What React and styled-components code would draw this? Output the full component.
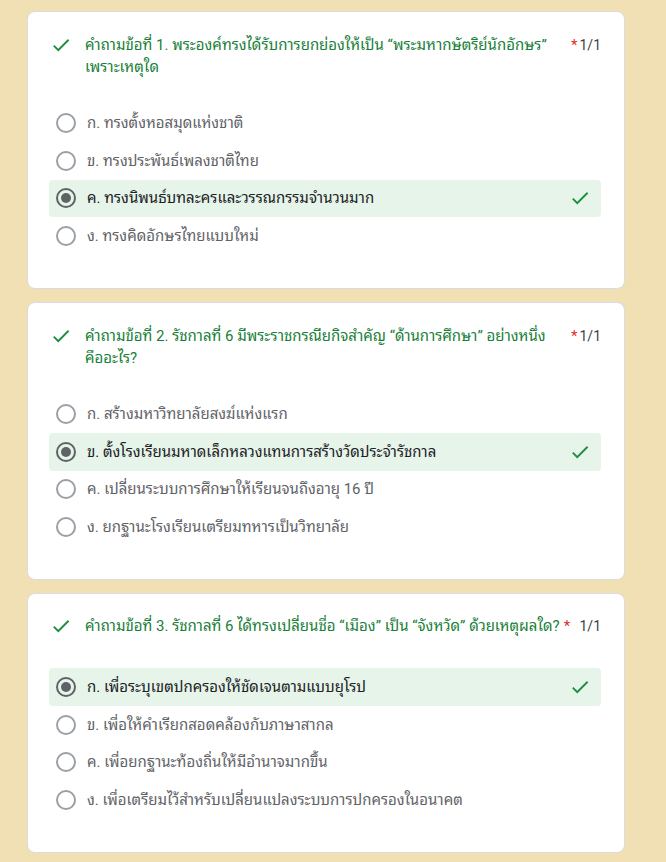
import React from "react";
import styled, { createGlobalStyle } from "styled-components";

const Global = createGlobalStyle`
  html, body { margin: 0; padding: 0; background: #f1e0b3; }
  body { font-family: Roboto, "Noto Sans Thai Looped", "Noto Sans Thai", Arial, sans-serif; }
`;

const Page = styled.div`
  display: flex;
  flex-direction: column;
  gap: 13px;
  padding: 11px 0 0 27px;
  width: 598px;
`;

const Card = styled.section`
  background: #fff;
  border: 1px solid #dadce0;
  border-radius: 8px;
  padding: ${(p) => (p.$tight ? "21px" : "22px")} 23px 33px 21px;
  display: flex;
  flex-direction: column;
  gap: 26px;
`;

const Header = styled.div`
  display: flex;
  align-items: flex-start;
  min-height: 27px;
`;

const IconBox = styled.span`
  width: 24px;
  height: 22px;
  flex: none;
  display: flex;
  align-items: center;
  justify-content: center;
  margin-right: 12px;
  color: #1e8e3e;
`;

const TitleWrap = styled.div`
  flex: 1;
  display: flex;
  align-items: flex-start;
  min-width: 0;
`;

const TitleText = styled.span`
  font-size: 15px;
  line-height: 22px;
  color: #188038;
`;

const Required = styled.span`
  color: #d93025;
  font-size: 15px;
  line-height: 22px;
  margin-left: 4px;
  flex: none;
`;

const Score = styled.span`
  flex: none;
  font-size: 14px;
  line-height: 22px;
  color: #3c4043;
  margin-left: 2px;
`;

const Options = styled.div`
  display: flex;
  flex-direction: column;
`;

const Option = styled.div`
  display: flex;
  align-items: center;
  height: 37.75px;
  padding: 0 10px 0 7px;
  border-radius: 4px;
  background: ${(p) => (p.$correct ? "#e6f4ea" : "transparent")};
`;

const Radio = styled.span`
  width: 20px;
  height: 20px;
  box-sizing: border-box;
  border-radius: 50%;
  border: 2px solid ${(p) => (p.$checked ? "#5f6368" : "#9aa0a6")};
  flex: none;
  display: flex;
  align-items: center;
  justify-content: center;
  margin-right: 11px;
  &::after {
    content: "";
    display: ${(p) => (p.$checked ? "block" : "none")};
    width: 10px;
    height: 10px;
    border-radius: 50%;
    background: #5f6368;
  }
`;

const OptionText = styled.span`
  flex: 1;
  font-size: 15px;
  line-height: 20px;
  color: ${(p) => (p.$checked ? "#202124" : "#5f6368")};
`;

const Check = ({ size = 22 }) => (
  <svg width={size} height={size} viewBox="0 0 24 24" fill="currentColor">
    <path d="M9 16.17L4.83 12l-1.42 1.41L9 19 21 7l-1.41-1.41z" />
  </svg>
);

const OkMark = styled.span`
  display: flex;
  color: #1e8e3e;
`;

const questions = [
  {
    title:
      "คำถามข้อที่ 1. พระองค์ทรงได้รับการยกย่องให้เป็น “พระมหากษัตริย์นักอักษร” เพราะเหตุใด",
    options: [
      "ก. ทรงตั้งหอสมุดแห่งชาติ",
      "ข. ทรงประพันธ์เพลงชาติไทย",
      "ค. ทรงนิพนธ์บทละครและวรรณกรรมจำนวนมาก",
      "ง. ทรงคิดอักษรไทยแบบใหม่",
    ],
    answer: 2,
  },
  {
    title:
      "คำถามข้อที่ 2. รัชกาลที่ 6 มีพระราชกรณียกิจสำคัญ “ด้านการศึกษา” อย่างหนึ่ง คืออะไร?",
    options: [
      "ก. สร้างมหาวิทยาลัยสงฆ์แห่งแรก",
      "ข. ตั้งโรงเรียนมหาดเล็กหลวงแทนการสร้างวัดประจำรัชกาล",
      "ค. เปลี่ยนระบบการศึกษาให้เรียนจนถึงอายุ 16 ปี",
      "ง. ยกฐานะโรงเรียนเตรียมทหารเป็นวิทยาลัย",
    ],
    answer: 1,
  },
  {
    title:
      "คำถามข้อที่ 3. รัชกาลที่ 6 ได้ทรงเปลี่ยนชื่อ “เมือง” เป็น “จังหวัด” ด้วยเหตุผลใด?",
    options: [
      "ก. เพื่อระบุเขตปกครองให้ชัดเจนตามแบบยุโรป",
      "ข. เพื่อให้คำเรียกสอดคล้องกับภาษาสากล",
      "ค. เพื่อยกฐานะท้องถิ่นให้มีอำนาจมากขึ้น",
      "ง. เพื่อเตรียมไว้สำหรับเปลี่ยนแปลงระบบการปกครองในอนาคต",
    ],
    answer: 0,
    tight: true,
  },
];

export default function App() {
  return (
    <>
      <Global />
      <Page>
        {questions.map((q, i) => (
          <Card key={i} $tight={q.tight}>
            <Header>
              <IconBox>
                <Check size={22} />
              </IconBox>
              <TitleWrap>
                <TitleText>{q.title}</TitleText>
                <Required>*</Required>
              </TitleWrap>
              <Score>1/1</Score>
            </Header>
            <Options>
              {q.options.map((o, j) => {
                const c = j === q.answer;
                return (
                  <Option key={j} $correct={c}>
                    <Radio $checked={c} />
                    <OptionText $checked={c}>{o}</OptionText>
                    {c && (
                      <OkMark>
                        <Check size={22} />
                      </OkMark>
                    )}
                  </Option>
                );
              })}
            </Options>
          </Card>
        ))}
      </Page>
    </>
  );
}
